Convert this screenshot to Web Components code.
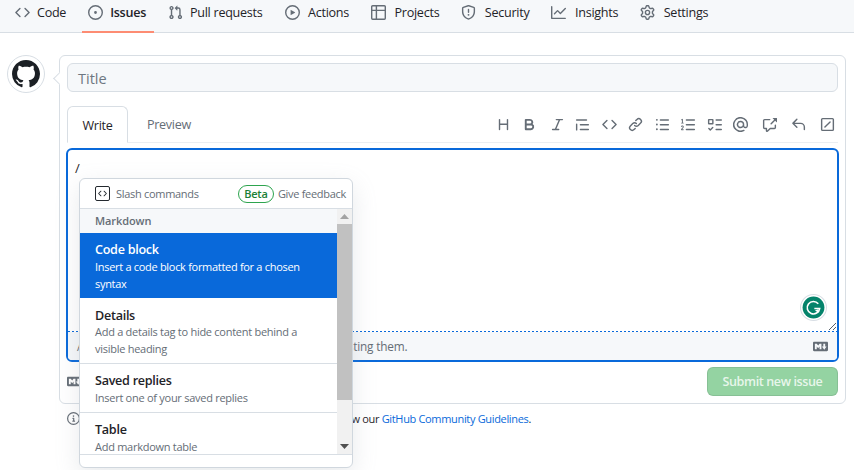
<!DOCTYPE html>
<html>
<head>
<meta charset="utf-8">
<title>New issue</title>
<style>
html, body { margin: 0; height: 100%; overflow: hidden; background: #fff; }
body { font: 13px/17px "Open Sans", "Noto Sans", sans-serif; color: #1f2328; }
</style>
</head>
<body>
<gh-app></gh-app>
<script>
const ICONS = {
  code: 'm11.28 3.22 4.25 4.25a.75.75 0 0 1 0 1.06l-4.25 4.25a.749.749 0 0 1-1.275-.326.749.749 0 0 1 .215-.734L13.94 8l-3.72-3.72a.749.749 0 0 1 .326-1.275.749.749 0 0 1 .734.215Zm-6.56 0a.751.751 0 0 1 1.042.018.751.751 0 0 1 .018 1.042L2.06 8l3.72 3.72a.749.749 0 0 1-.326 1.275.749.749 0 0 1-.734-.215L.47 8.53a.75.75 0 0 1 0-1.06Z',
  issue: 'M8 9.5a1.5 1.5 0 1 0 0-3 1.5 1.5 0 0 0 0 3Z M8 0a8 8 0 1 1 0 16A8 8 0 0 1 8 0ZM1.5 8a6.5 6.5 0 1 0 13 0 6.5 6.5 0 0 0-13 0Z',
  pull: 'M1.5 3.25a2.25 2.25 0 1 1 3 2.122v5.256a2.251 2.251 0 1 1-1.5 0V5.372A2.25 2.25 0 0 1 1.5 3.25Zm5.677-.177L9.573.677A.25.25 0 0 1 10 .854V2.5h1A2.5 2.5 0 0 1 13.5 5v5.628a2.251 2.251 0 1 1-1.5 0V5a1 1 0 0 0-1-1h-1v1.646a.25.25 0 0 1-.427.177L7.177 3.427a.25.25 0 0 1 0-.354ZM3.75 2.5a.75.75 0 1 0 0 1.5.75.75 0 0 0 0-1.5Zm0 9.5a.75.75 0 1 0 0 1.5.75.75 0 0 0 0-1.5Zm8.25.75a.75.75 0 1 0 1.5 0 .75.75 0 0 0-1.5 0Z',
  play: 'M8 0a8 8 0 1 1 0 16A8 8 0 0 1 8 0ZM1.5 8a6.5 6.5 0 1 0 13 0 6.5 6.5 0 0 0-13 0Zm4.879-2.773 4.264 2.559a.25.25 0 0 1 0 .428l-4.264 2.559A.25.25 0 0 1 6 10.559V5.442a.25.25 0 0 1 .379-.215Z',
  table: 'M0 1.75C0 .784.784 0 1.75 0h12.5C15.216 0 16 .784 16 1.75v12.5A1.75 1.75 0 0 1 14.25 16H1.75A1.75 1.75 0 0 1 0 14.25ZM6.5 6.5v8h7.75a.25.25 0 0 0 .25-.25V6.5Zm8-1.5V1.75a.25.25 0 0 0-.25-.25H6.5V5Zm-13 1.5v7.75c0 .138.112.25.25.25H5v-8ZM5 5V1.5H1.75a.25.25 0 0 0-.25.25V5Z',
  shield: 'M7.467.133a1.748 1.748 0 0 1 1.066 0l5.25 1.68A1.75 1.75 0 0 1 15 3.48V7c0 1.566-.32 3.182-1.303 4.682-.983 1.498-2.585 2.813-5.032 3.855a1.697 1.697 0 0 1-1.33 0c-2.447-1.042-4.049-2.357-5.032-3.855C1.32 10.182 1 8.566 1 7V3.48a1.75 1.75 0 0 1 1.217-1.667Zm.61 1.429a.25.25 0 0 0-.153 0l-5.25 1.68a.25.25 0 0 0-.174.238V7c0 1.358.275 2.666 1.057 3.86.784 1.194 2.121 2.34 4.366 3.297a.196.196 0 0 0 .154 0c2.245-.956 3.582-2.104 4.366-3.298C13.225 9.666 13.5 8.36 13.5 7V3.48a.251.251 0 0 0-.174-.237l-5.25-1.68ZM8.75 4.75v3a.75.75 0 0 1-1.5 0v-3a.75.75 0 0 1 1.5 0ZM9 10.5a1 1 0 1 1-2 0 1 1 0 0 1 2 0Z',
  graph: 'M1.5 1.75V13.5h13.75a.75.75 0 0 1 0 1.5H.75a.75.75 0 0 1-.75-.75V1.75a.75.75 0 0 1 1.5 0Zm14.28 2.53-5.25 5.25a.75.75 0 0 1-1.06 0L7 7.06 4.28 9.78a.751.751 0 0 1-1.042-.018.751.751 0 0 1-.018-1.042l3.25-3.25a.75.75 0 0 1 1.06 0L10 7.94l4.72-4.72a.751.751 0 0 1 1.042.018.751.751 0 0 1 .018 1.042Z',
  gear: 'M8 0a8.2 8.2 0 0 1 .701.031C9.444.095 9.99.645 10.16 1.29l.288 1.107c.018.066.079.158.212.224.231.114.454.243.668.386.123.082.233.09.299.071l1.103-.303c.644-.176 1.392.021 1.82.63.27.385.506.792.704 1.218.315.675.111 1.422-.364 1.891l-.814.806c-.049.048-.098.147-.088.294.016.257.016.515 0 .772-.01.147.038.246.088.294l.814.806c.475.469.679 1.216.364 1.891a7.977 7.977 0 0 1-.704 1.217c-.428.61-1.176.807-1.82.63l-1.102-.302c-.067-.019-.177-.011-.3.071a5.909 5.909 0 0 1-.668.386c-.133.066-.194.158-.211.224l-.29 1.106c-.168.646-.715 1.196-1.458 1.26a8.006 8.006 0 0 1-1.402 0c-.743-.064-1.289-.614-1.458-1.26l-.289-1.106c-.018-.066-.079-.158-.212-.224a5.738 5.738 0 0 1-.668-.386c-.123-.082-.233-.09-.299-.071l-1.103.303c-.644.176-1.392-.021-1.82-.63a8.12 8.12 0 0 1-.704-1.218c-.315-.675-.111-1.422.363-1.891l.815-.806c.05-.048.098-.147.088-.294a6.214 6.214 0 0 1 0-.772c.01-.147-.038-.246-.088-.294l-.815-.806C.635 6.045.431 5.298.746 4.623a7.92 7.92 0 0 1 .704-1.217c.428-.61 1.176-.807 1.82-.63l1.102.302c.067.019.177.011.3-.071.214-.143.437-.272.668-.386.133-.066.194-.158.211-.224l.29-1.106C6.009.645 6.556.095 7.299.03 7.53.01 7.764 0 8 0Zm-.571 1.525c-.036.003-.108.036-.137.146l-.289 1.105c-.147.561-.549.967-.998 1.189-.173.086-.34.183-.5.29-.417.278-.97.423-1.529.27l-1.103-.303c-.109-.03-.175.016-.195.045-.22.312-.412.644-.573.99-.014.031-.021.11.059.19l.815.806c.411.406.562.957.53 1.456a4.709 4.709 0 0 0 0 .582c.032.499-.119 1.05-.53 1.456l-.815.806c-.081.08-.073.159-.059.19.162.346.353.677.573.989.02.03.085.076.195.046l1.102-.303c.56-.153 1.113-.008 1.53.27.161.107.328.204.501.29.447.222.85.629.997 1.189l.289 1.105c.029.109.101.143.137.146a6.6 6.6 0 0 0 1.142 0c.036-.003.108-.036.137-.146l.289-1.105c.147-.561.549-.967.998-1.189.173-.086.34-.183.5-.29.417-.278.97-.423 1.529-.27l1.103.303c.109.029.175-.016.195-.045.22-.313.411-.644.573-.99.014-.031.021-.11-.059-.19l-.815-.806c-.411-.406-.562-.957-.53-1.456a4.709 4.709 0 0 0 0-.582c-.032-.499.119-1.05.53-1.456l.815-.806c.081-.08.073-.159.059-.19a6.464 6.464 0 0 0-.573-.989c-.02-.03-.085-.076-.195-.046l-1.102.303c-.56.153-1.113.008-1.53-.27a4.44 4.44 0 0 0-.501-.29c-.447-.222-.85-.629-.997-1.189l-.289-1.105c-.029-.11-.101-.143-.137-.146a6.6 6.6 0 0 0-1.142 0ZM11 8a3 3 0 1 1-6 0 3 3 0 0 1 6 0ZM9.5 8a1.5 1.5 0 1 0-3.001.001A1.5 1.5 0 0 0 9.5 8Z',
  github: 'M8 0c4.42 0 8 3.58 8 8a8.013 8.013 0 0 1-5.45 7.59c-.4.08-.55-.17-.55-.38 0-.27.01-1.13.01-2.2 0-.75-.25-1.23-.54-1.48 1.78-.2 3.65-.88 3.65-3.95 0-.88-.31-1.59-.82-2.15.08-.2.36-1.02-.08-2.12 0 0-.67-.22-2.2.82-.64-.18-1.32-.27-2-.27-.68 0-1.36.09-2 .27-1.53-1.03-2.2-.82-2.2-.82-.44 1.1-.16 1.92-.08 2.12-.51.56-.82 1.28-.82 2.15 0 3.06 1.86 3.75 3.64 3.95-.23.2-.44.55-.51 1.07-.46.21-1.61.55-2.33-.66-.15-.24-.6-.83-1.23-.82-.67.01-.27.38.01.53.34.19.73.9.82 1.13.16.45.68 1.31 2.69.94 0 .67.01 1.3.01 1.49 0 .21-.15.45-.55.38A7.995 7.995 0 0 1 0 8c0-4.42 3.58-8 8-8Z',
  heading: 'M3.75 2a.75.75 0 0 1 .75.75V7h7V2.75a.75.75 0 0 1 1.5 0v10.5a.75.75 0 0 1-1.5 0V8.5h-7v4.75a.75.75 0 0 1-1.5 0V2.75A.75.75 0 0 1 3.75 2Z',
  bold: 'M4 2h4.5a3.501 3.501 0 0 1 2.852 5.53A3.499 3.499 0 0 1 9.5 14H4a1 1 0 0 1-1-1V3a1 1 0 0 1 1-1Zm1 7v3h4.5a1.5 1.5 0 0 0 0-3Zm3.5-2a1.5 1.5 0 0 0 0-3H5v3Z',
  italic: 'M6 2.75A.75.75 0 0 1 6.75 2h6.5a.75.75 0 0 1 0 1.5h-2.505l-3.858 9H9.25a.75.75 0 0 1 0 1.5h-6.5a.75.75 0 0 1 0-1.5h2.505l3.858-9H6.75A.75.75 0 0 1 6 2.75Z',
  quote: 'M1.75 2.5h10.5a.75.75 0 0 1 0 1.5H1.75a.75.75 0 0 1 0-1.5Zm4 5h8.5a.75.75 0 0 1 0 1.5h-8.5a.75.75 0 0 1 0-1.5Zm0 5h8.5a.75.75 0 0 1 0 1.5h-8.5a.75.75 0 0 1 0-1.5ZM2.5 7.75v6a.75.75 0 0 1-1.5 0v-6a.75.75 0 0 1 1.5 0Z',
  link: 'm7.775 3.275 1.25-1.25a3.5 3.5 0 1 1 4.95 4.95l-2.5 2.5a3.5 3.5 0 0 1-4.95 0 .751.751 0 0 1 .018-1.042.751.751 0 0 1 1.042-.018 1.998 1.998 0 0 0 2.83 0l2.5-2.5a2.002 2.002 0 0 0-2.83-2.83l-1.25 1.25a.751.751 0 0 1-1.042-.018.751.751 0 0 1-.018-1.042Zm-4.69 9.64a1.998 1.998 0 0 0 2.83 0l1.25-1.25a.751.751 0 0 1 1.042.018.751.751 0 0 1 .018 1.042l-1.25 1.25a3.5 3.5 0 1 1-4.95-4.95l2.5-2.5a3.5 3.5 0 0 1 4.95 0 .751.751 0 0 1-.018 1.042.751.751 0 0 1-1.042.018 1.998 1.998 0 0 0-2.83 0l-2.5 2.5a1.998 1.998 0 0 0 0 2.83Z',
  ul: 'M5.75 2.5h8.5a.75.75 0 0 1 0 1.5h-8.5a.75.75 0 0 1 0-1.5Zm0 5h8.5a.75.75 0 0 1 0 1.5h-8.5a.75.75 0 0 1 0-1.5Zm0 5h8.5a.75.75 0 0 1 0 1.5h-8.5a.75.75 0 0 1 0-1.5ZM2 14a1 1 0 1 1 0-2 1 1 0 0 1 0 2Zm1-6a1 1 0 1 1-2 0 1 1 0 0 1 2 0ZM2 4a1 1 0 1 1 0-2 1 1 0 0 1 0 2Z',
  ol: 'M5 3.25a.75.75 0 0 1 .75-.75h8.5a.75.75 0 0 1 0 1.5h-8.5A.75.75 0 0 1 5 3.25Zm0 5a.75.75 0 0 1 .75-.75h8.5a.75.75 0 0 1 0 1.5h-8.5A.75.75 0 0 1 5 8.25Zm0 5a.75.75 0 0 1 .75-.75h8.5a.75.75 0 0 1 0 1.5h-8.5a.75.75 0 0 1-.75-.75ZM.924 10.32a.5.5 0 0 1-.851-.525l.001-.001.001-.002.002-.004.007-.011c.097-.144.215-.273.348-.384.228-.19.588-.392 1.068-.392.468 0 .858.181 1.126.484.259.294.377.673.377 1.038 0 .987-.686 1.495-1.156 1.845l-.047.035c-.303.225-.522.4-.654.597h1.357a.5.5 0 0 1 0 1H.5a.5.5 0 0 1-.5-.5c0-1.005.692-1.52 1.167-1.875l.035-.025c.531-.396.8-.625.8-1.078a.57.57 0 0 0-.128-.376C1.806 10.068 1.695 10 1.5 10a.658.658 0 0 0-.429.163.835.835 0 0 0-.144.153ZM2.003 2.5V6h.503a.5.5 0 0 1 0 1H.5a.5.5 0 0 1 0-1h.503V3.308l-.28.14a.5.5 0 0 1-.446-.895l1.003-.5a.5.5 0 0 1 .723.447Z',
  tasklist: 'M2 2h4a1 1 0 0 1 1 1v4a1 1 0 0 1-1 1H2a1 1 0 0 1-1-1V3a1 1 0 0 1 1-1Zm4.655 8.595a.75.75 0 0 1 0 1.06L4.03 14.28a.75.75 0 0 1-1.06 0l-1.5-1.5a.749.749 0 0 1 .326-1.275.749.749 0 0 1 .734.215l.97.97 2.095-2.095a.75.75 0 0 1 1.06 0ZM9.75 2.5h5.5a.75.75 0 0 1 0 1.5h-5.5a.75.75 0 0 1 0-1.5Zm0 5h5.5a.75.75 0 0 1 0 1.5h-5.5a.75.75 0 0 1 0-1.5Zm0 5h5.5a.75.75 0 0 1 0 1.5h-5.5a.75.75 0 0 1 0-1.5Zm-7.25-9v3h3v-3Z',
  mention: 'M4.75 2.37a6.501 6.501 0 0 0 6.5 11.26.75.75 0 0 1 .75 1.298A7.999 7.999 0 0 1 .989 4.148 8 8 0 0 1 16 7.75v1.5a2.75 2.75 0 0 1-5.072 1.475 3.999 3.999 0 0 1-6.65-4.19A4 4 0 0 1 12 8v1.25a1.25 1.25 0 0 0 2.5 0V7.867a6.5 6.5 0 0 0-9.75-5.496ZM10.5 8a2.5 2.5 0 1 0-5 0 2.5 2.5 0 0 0 5 0Z',
  xref: 'M2.75 3.5a.25.25 0 0 0-.25.25v7.5c0 .138.112.25.25.25h2a.75.75 0 0 1 .75.75v2.19l2.72-2.72a.749.749 0 0 1 .53-.22h4.5a.25.25 0 0 0 .25-.25v-2.5a.75.75 0 0 1 1.5 0v2.5A1.75 1.75 0 0 1 13.25 13H9.06l-2.573 2.573A1.458 1.458 0 0 1 4 14.543V13H2.75A1.75 1.75 0 0 1 1 11.25v-7.5C1 2.784 1.784 2 2.75 2h5.5a.75.75 0 0 1 0 1.5ZM16 1.25v4.146a.25.25 0 0 1-.427.177L14.03 4.03l-3.75 3.75a.749.749 0 0 1-1.275-.326.749.749 0 0 1 .215-.734l3.75-3.75-1.543-1.543A.25.25 0 0 1 11.604 1h4.146a.25.25 0 0 1 .25.25Z',
  reply: 'M6.78 1.97a.75.75 0 0 1 0 1.06L3.81 6h6.44A4.75 4.75 0 0 1 15 10.75v2.5a.75.75 0 0 1-1.5 0v-2.5a3.25 3.25 0 0 0-3.25-3.25H3.81l2.97 2.97a.749.749 0 0 1-.326 1.275.749.749 0 0 1-.734-.215L1.47 7.28a.75.75 0 0 1 0-1.06l4.25-4.25a.75.75 0 0 1 1.06 0Z',
  diagonal: 'M13.25 1c.966 0 1.75.784 1.75 1.75v10.5A1.75 1.75 0 0 1 13.25 15H2.75A1.75 1.75 0 0 1 1 13.25V2.75C1 1.784 1.784 1 2.75 1ZM2.75 2.5a.25.25 0 0 0-.25.25v10.5c0 .138.112.25.25.25h10.5a.25.25 0 0 0 .25-.25V2.75a.25.25 0 0 0-.25-.25Zm8.53 3.28-5.5 5.5a.749.749 0 0 1-1.275-.326.749.749 0 0 1 .215-.734l5.5-5.5a.751.751 0 0 1 1.042.018.751.751 0 0 1 .018 1.042Z',
  markdown: 'M14.85 3c.63 0 1.15.52 1.14 1.15v7.7c0 .63-.51 1.15-1.15 1.15H1.15C.52 13 0 12.48 0 11.84V4.15C0 3.52.52 3 1.15 3ZM9 11V5H7L5.5 7 4 5H2v6h2V8l1.5 1.92L7 8v3Zm2.99.5L14.5 8H13V5h-2v3H9.5Z',
  info: 'M0 8a8 8 0 1 1 16 0A8 8 0 0 1 0 8Zm8-6.5a6.5 6.5 0 1 0 0 13 6.5 6.5 0 0 0 0-13ZM6.5 7.75A.75.75 0 0 1 7.25 7h1a.75.75 0 0 1 .75.75v2.75h.25a.75.75 0 0 1 0 1.5h-2a.75.75 0 0 1 0-1.5h.25v-2h-.25a.75.75 0 0 1-.75-.75ZM8 6a1 1 0 1 1 0-2 1 1 0 0 1 0 2Z'
};

class OctIcon extends HTMLElement {
  connectedCallback() {
    const size = this.getAttribute('size') || 15;
    const d = ICONS[this.getAttribute('name')];
    this.attachShadow({mode: 'open'}).innerHTML = `
      <style>:host { display: inline-flex; flex: none; } svg { display: block; fill: currentColor; }</style>
      <svg width="${size}" height="${size}" viewBox="0 0 16 16"><path fill-rule="evenodd" d="${d}"></path></svg>`;
  }
}
customElements.define('oct-icon', OctIcon);

const navTemplate = document.createElement('template');
navTemplate.innerHTML = `
<style>
:host { display: flex; height: 33px; box-sizing: border-box; padding-left: 9px; background: #f6f8fa; border-bottom: 1px solid #d8dee4; }
</style>
<slot></slot>`;
customElements.define('repo-nav', class extends HTMLElement {
  constructor() {
    super();
    this.attachShadow({mode: 'open'}).appendChild(navTemplate.content.cloneNode(true));
  }
});

const navItemTemplate = document.createElement('template');
navItemTemplate.innerHTML = `
<style>
:host { display: flex; align-items: center; gap: 7px; height: 33px; box-sizing: border-box; padding: 0 8px 8px 6px; margin-right: 8px; color: #1f2328; font-size: 12.6px; letter-spacing: -.28px; }
:host([wide]) { gap: 8.5px; }
:host([selected]) { font-weight: 600; box-shadow: inset 0 -2px 0 #fd8c73; }
.icon { display: flex; color: #656d76; }
</style>
<span class="icon"></span><slot></slot>`;
customElements.define('nav-item', class extends HTMLElement {
  connectedCallback() {
    const root = this.attachShadow({mode: 'open'});
    root.appendChild(navItemTemplate.content.cloneNode(true));
    const icon = document.createElement('oct-icon');
    icon.setAttribute('name', this.getAttribute('icon'));
    root.querySelector('.icon').appendChild(icon);
  }
});

const popupItemTemplate = document.createElement('template');
popupItemTemplate.innerHTML = `
<style>
:host { display: block; padding: 8px 15px 6px; border-bottom: 1px solid #d8dee4; background: #fff; color: #1f2328; }
:host([active]) { background: #0969da; color: #fff; border-bottom-color: #fff; }
.title { font-size: 12.6px; letter-spacing: -.28px; font-weight: 600; line-height: 17px; }
.desc { font-size: 11px; letter-spacing: -.27px; line-height: 17px; color: #656d76; }
:host([tight]) .desc { margin-top: -1px; }
:host([active]) .desc { color: #fff; letter-spacing: -.3px; }
</style>
<div class="title"></div>
<div class="desc"><slot></slot></div>`;
customElements.define('popup-item', class extends HTMLElement {
  connectedCallback() {
    const root = this.attachShadow({mode: 'open'});
    root.appendChild(popupItemTemplate.content.cloneNode(true));
    root.querySelector('.title').textContent = this.getAttribute('label');
  }
});

const popupTemplate = document.createElement('template');
popupTemplate.innerHTML = `
<style>
:host { position: absolute; left: 79px; top: 178px; width: 274px; height: 290px; box-sizing: border-box; display: flex; flex-direction: column; background: #fff; border: 1px solid #d0d7de; border-radius: 6px; box-shadow: 0 8px 24px rgba(140,149,159,.2); font-size: 11px; letter-spacing: -.3px; overflow: hidden; }
header { display: flex; align-items: center; height: 30px; flex: none; box-sizing: border-box; padding: 0 6px 0 15px; border-bottom: 1px solid #d8dee4; color: #656d76; }
.cmd { width: 15px; height: 15px; box-sizing: border-box; border: 1.5px solid #24292f; border-radius: 2px; display: flex; align-items: center; justify-content: center; color: #24292f; margin-right: 6px; }
.grow { flex: 1; }
.beta { height: 18px; box-sizing: border-box; width: 36px; border: 1px solid #2da44e; border-radius: 10px; color: #1a7f37; font-weight: 600; line-height: 16px; text-align: center; margin-right: 4px; }
.body { flex: 1; display: flex; min-height: 0; }
.list { flex: 1; min-width: 0; overflow: hidden; }
.section { height: 24px; line-height: 24px; box-sizing: border-box; padding-left: 15px; background: #f6f8fa; color: #656d76; font-weight: 600; letter-spacing: -.1px; }
.bar { width: 15px; flex: none; background: #f1f1f1; display: flex; flex-direction: column; align-items: center; }
.arrow { height: 15px; flex: none; display: flex; align-items: center; justify-content: center; }
.arrow svg { display: block; fill: #505050; }
.arrow.up svg { fill: #a3a3a3; }
.thumb { height: 176px; width: 100%; flex: none; background: #c1c1c1; }
.track { flex: 1; }
footer { height: 12px; flex: none; border-top: 1px solid #d8dee4; }
</style>
<header>
  <span class="cmd"><oct-icon name="code" size="9"></oct-icon></span>
  <span class="grow">Slash commands</span>
  <span class="beta">Beta</span>
  <span>Give feedback</span>
</header>
<div class="body">
  <div class="list">
    <div class="section">Markdown</div>
    <slot></slot>
  </div>
  <div class="bar">
    <div class="arrow up"><svg width="9" height="5" viewBox="0 0 9 5"><path d="M4.5 0 9 5H0Z"/></svg></div>
    <div class="thumb"></div>
    <div class="track"></div>
    <div class="arrow"><svg width="9" height="5" viewBox="0 0 9 5"><path d="M0 0h9L4.5 5Z"/></svg></div>
  </div>
</div>
<footer></footer>`;
customElements.define('slash-popup', class extends HTMLElement {
  constructor() {
    super();
    this.attachShadow({mode: 'open'}).appendChild(popupTemplate.content.cloneNode(true));
  }
});

// the toolbar groups are not evenly spaced, so each icon carries its own gap
const toolbarIcons = [['heading',0],['bold',11],['italic',13],['quote',10],['code',12],['link',11],['ul',12],['ol',11],['tasklist',11],['mention',11],['xref',14.5],['reply',14],['diagonal',14]];
const editorTemplate = document.createElement('template');
editorTemplate.innerHTML = `
<style>
:host { display: block; }
.tabs { display: flex; align-items: flex-end; height: 36px; margin-top: 14px; border-bottom: 1px solid #eaeef2; }
.tab { height: 37px; box-sizing: border-box; margin-bottom: -1px; padding: 0 15px; line-height: 38px; font-size: 12.6px; letter-spacing: -.32px; color: #656d76; }
.tab.on { width: 61px; padding: 0; text-align: center; color: #1f2328; background: #fff; border: 1px solid #d8dee4; border-bottom-color: #fff; border-radius: 6px 6px 0 0; margin-right: 4px; }
.tools { margin-left: auto; display: flex; align-items: center; height: 36px; padding-right: 3px; box-sizing: border-box; color: #656d76; }
.box { height: 214px; box-sizing: border-box; margin: 5px -1px 0; border: 2px solid #0969da; border-radius: 6px; display: flex; flex-direction: column; position: relative; overflow: hidden; }
.area { flex: 1; padding: 8px 7px 9px; font-size: 13px; line-height: 20px; background: repeating-linear-gradient(90deg, #0969da 0 2px, transparent 2px 4px) left bottom / 100% 1px no-repeat; position: relative; }
.grammarly { position: absolute; right: 10px; bottom: 11px; width: 27px; height: 27px; }
.grip { position: absolute; right: 0; bottom: 1px; }
.attach { height: 28px; flex: none; box-sizing: border-box; background: #f6f8fa; display: flex; align-items: center; justify-content: space-between; padding: 0 9px; font-size: 11.8px; letter-spacing: -.16px; color: #656d76; }
</style>
<div class="tabs">
  <div class="tab on">Write</div>
  <div class="tab">Preview</div>
  <div class="tools"></div>
</div>
<div class="box">
  <div class="area">/
    <svg class="grammarly" viewBox="0 0 26 26">
      <circle cx="13" cy="13" r="12.5" fill="#fff" stroke="#d8dee4"/>
      <circle cx="13" cy="13" r="10.5" fill="#04836b"/>
      <path d="M17.6 9.4A6 6 0 1 0 18.9 14H13.8" fill="none" stroke="#fff" stroke-width="1.6"/>
      <path d="M14.4 15.8l3.4 2.2-.6-3.4z" fill="#fff"/>
    </svg>
    <svg class="grip" width="9" height="9" viewBox="0 0 9 9"><path d="M1 8 8 1M5 8 8 5" stroke="#57606a" fill="none"/></svg>
  </div>
  <div class="attach"><span>Attach files by dragging &amp; dropping, selecting or pasting them.</span><oct-icon name="markdown"></oct-icon></div>
</div>`;
customElements.define('issue-editor', class extends HTMLElement {
  connectedCallback() {
    const root = this.attachShadow({mode: 'open'});
    root.appendChild(editorTemplate.content.cloneNode(true));
    const tools = root.querySelector('.tools');
    toolbarIcons.forEach(([name, gap]) => {
      const i = document.createElement('oct-icon');
      i.setAttribute('name', name);
      i.style.marginLeft = gap + 'px';
      tools.appendChild(i);
    });
  }
});

const cardTemplate = document.createElement('template');
cardTemplate.innerHTML = `
<style>
:host { display: block; height: 349px; box-sizing: border-box; padding: 7px; border: 1px solid #d8dee4; border-radius: 6px; background: #fff; position: relative; }
.caret { position: absolute; left: -5px; top: 18px; width: 8px; height: 8px; background: #fff; border-left: 1px solid #d8dee4; border-bottom: 1px solid #d8dee4; transform: rotate(45deg); }
.title { height: 29px; box-sizing: border-box; padding: 0 10px; background: #f6f8fa; border: 1px solid #d8dee4; border-radius: 6px; line-height: 29px; font-size: 14.5px; color: #6e7781; }
.row { display: flex; align-items: center; justify-content: space-between; height: 29px; margin-top: 5px; color: #656d76; }
.submit { width: 131px; height: 29px; box-sizing: border-box; background: #94d3a2; border: 1px solid rgba(27,31,36,.1); border-radius: 6px; color: rgba(255,255,255,.8); font-weight: 600; font-size: 12.6px; letter-spacing: -.4px; line-height: 27px; text-align: center; }
</style>
<div class="caret"></div>
<div class="title">Title</div>
<issue-editor></issue-editor>
<div class="row"><oct-icon name="markdown"></oct-icon><div class="submit">Submit new issue</div></div>`;
customElements.define('issue-card', class extends HTMLElement {
  constructor() {
    super();
    this.attachShadow({mode: 'open'}).appendChild(cardTemplate.content.cloneNode(true));
  }
});

const appTemplate = document.createElement('template');
appTemplate.innerHTML = `
<style>
:host { display: block; position: relative; height: 470px; }
.main { display: flex; gap: 14px; padding: 22px 8px 0 7px; }
.avatar { width: 38px; height: 38px; flex: none; box-sizing: border-box; border: 1px solid #d8dee4; border-radius: 50%; display: flex; align-items: center; justify-content: center; color: #1b1f24; }
.col { flex: 1; min-width: 0; }
.rules { display: flex; align-items: center; gap: 5px; margin: 6px 0 0 8px; font-size: 11px; letter-spacing: -.33px; color: #1f2328; }
.rules .i { display: flex; color: #656d76; }
.rules a { color: #0969da; text-decoration: none; }
</style>
<repo-nav>
  <nav-item icon="code">Code</nav-item>
  <nav-item icon="issue" selected>Issues</nav-item>
  <nav-item icon="pull">Pull requests</nav-item>
  <nav-item icon="play" wide>Actions</nav-item>
  <nav-item icon="table" wide>Projects</nav-item>
  <nav-item icon="shield" wide>Security</nav-item>
  <nav-item icon="graph" wide>Insights</nav-item>
  <nav-item icon="gear" wide>Settings</nav-item>
</repo-nav>
<div class="main">
  <div class="avatar"><oct-icon name="github" size="28"></oct-icon></div>
  <div class="col">
    <issue-card></issue-card>
    <div class="rules"><span class="i"><oct-icon name="info" size="13"></oct-icon></span><span>Remember, contributions to this repository should follow our <a>GitHub Community Guidelines</a>.</span></div>
  </div>
</div>
<slash-popup>
  <popup-item active label="Code block">Insert a code block formatted for a chosen syntax</popup-item>
  <popup-item tight label="Details">Add a details tag to hide content behind a visible heading</popup-item>
  <popup-item label="Saved replies">Insert one of your saved replies</popup-item>
  <popup-item label="Table">Add markdown table</popup-item>
</slash-popup>`;
customElements.define('gh-app', class extends HTMLElement {
  constructor() {
    super();
    this.attachShadow({mode: 'open'}).appendChild(appTemplate.content.cloneNode(true));
  }
});
</script>
</body>
</html>
